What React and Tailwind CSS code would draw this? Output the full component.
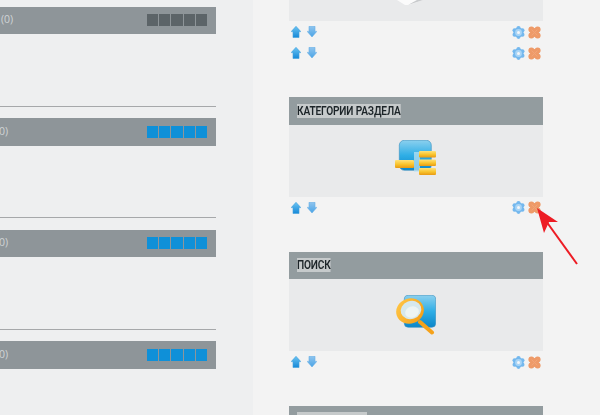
import React from "react";

function UpArrow() {
  return (
    <svg width="10" height="12" viewBox="0 0 10 12" className="blur-[0.3px]">
      <defs>
        <linearGradient id="upGrad" x1="0" y1="0" x2="0" y2="1">
          <stop offset="0" stopColor="#6cc4f2" />
          <stop offset="1" stopColor="#1488d8" />
        </linearGradient>
      </defs>
      <path d="M5 .3 9.8 5.6H8V11.6H2V5.6H.2Z" fill="url(#upGrad)" stroke="#3f9fdc" strokeWidth=".6" strokeLinejoin="round" />
    </svg>
  );
}

function DownArrow() {
  return (
    <svg width="10" height="12" viewBox="0 0 10 12" className="blur-[0.3px]">
      <defs>
        <linearGradient id="downGrad" x1="0" y1="0" x2="0" y2="1">
          <stop offset="0" stopColor="#8fc4ee" />
          <stop offset="1" stopColor="#4aa4e6" />
        </linearGradient>
      </defs>
      <path d="M2 .3H8V5.4H9.8L5 11 .2 5.4H2Z" fill="url(#downGrad)" stroke="#67aee6" strokeWidth=".6" strokeLinejoin="round" />
    </svg>
  );
}

function Gear() {
  return (
    <svg width="13" height="13" viewBox="0 0 13 13" className="blur-[0.3px]">
      <g fill="#74b8ee">
        <circle cx="6.5" cy="6.5" r="5" />
        <circle cx="6.5" cy="2.2" r="2.1" />
        <circle cx="6.5" cy="10.8" r="2.1" />
        <circle cx="2.6" cy="4.3" r="2.1" />
        <circle cx="10.4" cy="4.3" r="2.1" />
        <circle cx="2.6" cy="8.7" r="2.1" />
        <circle cx="10.4" cy="8.7" r="2.1" />
      </g>
      <circle cx="6.5" cy="6.5" r="3.4" fill="#a9d5f6" />
      <circle cx="6.5" cy="6.5" r="1.5" fill="#f3f6f9" />
    </svg>
  );
}

function Cross() {
  return (
    <svg width="13" height="13" viewBox="0 0 13 13" className="blur-[0.3px]">
      <g fill="#ee9a68">
        <circle cx="3.4" cy="3.4" r="3" />
        <circle cx="9.6" cy="3.4" r="3" />
        <circle cx="3.4" cy="9.6" r="3" />
        <circle cx="9.6" cy="9.6" r="3" />
        <circle cx="6.5" cy="6.5" r="4.4" />
      </g>
      <path d="M3.5 3.5 9.5 9.5M9.5 3.5 3.5 9.5" stroke="#f0a478" strokeWidth="1" />
    </svg>
  );
}

function CategoryIcon() {
  return (
    <svg width="42" height="36" viewBox="0 0 42 36" className="mb-[5px] blur-[0.3px]">
      <defs>
        <linearGradient id="catBlue" x1="0" y1="0" x2="0" y2="1">
          <stop offset="0" stopColor="#8bd0ee" />
          <stop offset=".5" stopColor="#2faee6" />
          <stop offset="1" stopColor="#0c86c8" />
        </linearGradient>
        <linearGradient id="catGold" x1="0" y1="0" x2="0" y2="1">
          <stop offset="0" stopColor="#ffe27a" />
          <stop offset=".55" stopColor="#f8c32c" />
          <stop offset="1" stopColor="#e89a14" />
        </linearGradient>
      </defs>
      <rect x="4.3" y=".3" width="32" height="30" rx="5" fill="url(#catBlue)" stroke="#3a8fbe" strokeWidth=".6" />
      <rect x="19" y="12" width="6" height="20" fill="#bfe4f4" opacity=".7" />
      <rect x="0" y="20" width="19" height="8" rx="1" fill="url(#catGold)" />
      <rect x="24" y="11" width="17" height="6.5" rx="1" fill="url(#catGold)" />
      <rect x="24" y="19.5" width="17" height="6.5" rx="1" fill="url(#catGold)" />
      <rect x="24" y="28" width="17" height="7" rx="1" fill="url(#catGold)" />
    </svg>
  );
}

function SearchIcon() {
  return (
    <svg width="40" height="40" viewBox="0 0 40 40" className="blur-[0.3px]">
      <defs>
        <linearGradient id="searchBlue" x1="0" y1="0" x2="0" y2="1">
          <stop offset="0" stopColor="#8bd0ee" />
          <stop offset=".5" stopColor="#2faee6" />
          <stop offset="1" stopColor="#0c86c8" />
        </linearGradient>
        <linearGradient id="searchGold" x1="0" y1="0" x2="1" y2="1">
          <stop offset="0" stopColor="#ffc94a" />
          <stop offset="1" stopColor="#f59a10" />
        </linearGradient>
      </defs>
      <rect x="8.3" y=".3" width="31.4" height="32" rx="4" fill="url(#searchBlue)" stroke="#3a8fbe" strokeWidth=".6" />
      <path d="M24 27 36 37.5" stroke="#f5a21a" strokeWidth="4" strokeLinecap="round" />
      <ellipse cx="14" cy="16" rx="14" ry="12.5" fill="url(#searchGold)" transform="rotate(-20 14 16)" />
      <ellipse cx="15" cy="15" rx="10.5" ry="9" fill="#d6e8ec" transform="rotate(-20 15 15)" />
      <ellipse cx="16" cy="17" rx="7" ry="5.5" fill="#edf4f3" transform="rotate(-20 16 17)" />
    </svg>
  );
}

function IconRow() {
  return (
    <div className="flex h-[22.5px] items-center justify-between pl-[1.5px] pr-[2px]">
      <div className="flex gap-[6px]">
        <UpArrow />
        <DownArrow />
      </div>
      <div className="flex gap-[3px]">
        <Gear />
        <Cross />
      </div>
    </div>
  );
}

function Panel({ title, icon }) {
  return (
    <div>
      <div className="flex h-[27.5px] items-center overflow-hidden bg-[#939c9f] pl-[8px]">
        <span className="origin-left scale-x-[0.78] whitespace-nowrap bg-[#c6cacb] text-[13px] leading-[14px] font-semibold tracking-[-0.2px] text-[#1c2428] [font-family:Roboto,sans-serif]">
          {title}
        </span>
      </div>
      <div className="flex h-[72px] items-center justify-center bg-[#e9eaeb]">{icon}</div>
      <IconRow />
    </div>
  );
}

function LeftRow({ label, squares, last }) {
  return (
    <div>
      <div className="flex h-[27.5px] items-center justify-between bg-[#8e9599] pr-[9px]">
        <span className="text-[10.5px] text-[#d0d4d6] [font-family:'Open_Sans',sans-serif]">{label}</span>
        <div className="flex gap-[1px]">
          {[0, 1, 2, 3, 4].map((i) => (
            <div key={i} className={`h-[12px] w-[11.2px] ${squares}`} />
          ))}
        </div>
      </div>
      {!last && <div className="mt-[71.5px] mb-[11.5px] border-t border-[#a6a8aa]" />}
    </div>
  );
}

export default function App() {
  return (
    <div className="relative flex h-[415px] w-[600px] overflow-hidden bg-[#f3f3f3]">
      <div className="h-full w-[253px] shrink-0 bg-[#eeeff0] pt-[6.5px]">
        <div className="w-[216px]">
          <LeftRow label={<span className="pl-[1px]">(0)</span>} squares="bg-[#5c6468]" />
          <LeftRow label={<span className="-ml-[4px] inline-block">(0)</span>} squares="bg-[#0f90d8]" />
          <LeftRow label={<span className="-ml-[4px] inline-block">(0)</span>} squares="bg-[#0f90d8]" />
          <LeftRow label={<span className="-ml-[4px] inline-block">(0)</span>} squares="bg-[#0f90d8]" last />
        </div>
      </div>

      <div className="w-[347px] pl-[36px]">
        <div className="w-[254px]">
          <div className="flex h-[21px] justify-center bg-[#e9eaeb]">
            <svg width="26" height="5" viewBox="0 0 26 5" className="-ml-[12px]">
              <path d="M0 0 8 5H12L26 0Z" fill="#fbfbfb" />
              <path d="M11 5 26 0H20Z" fill="#c9cbcd" />
            </svg>
          </div>
          <IconRow />
          <div className="-mt-[1.5px]">
            <IconRow />
          </div>
          <div className="h-[32.5px]" />
          <Panel title="КАТЕГОРИИ РАЗДЕЛА" icon={<CategoryIcon />} />
          <div className="h-[32.5px]" />
          <Panel title="ПОИСК" icon={<SearchIcon />} />
          <div className="h-[32.5px]" />
          <div className="h-[27.5px] bg-[#939c9f] pl-[8px] pt-[6px]">
            <div className="h-[14px] w-[70px] bg-[#c6cacb]" />
          </div>
        </div>
      </div>

      <svg className="absolute left-[530px] top-[200px]" width="55" height="70" viewBox="530 200 55 70">
        <path d="M577 264 546 221" stroke="#ed1c24" strokeWidth="2" />
        <path d="M537 208 558 222 549 222 544 233Z" fill="#ed1c24" />
      </svg>
    </div>
  );
}
